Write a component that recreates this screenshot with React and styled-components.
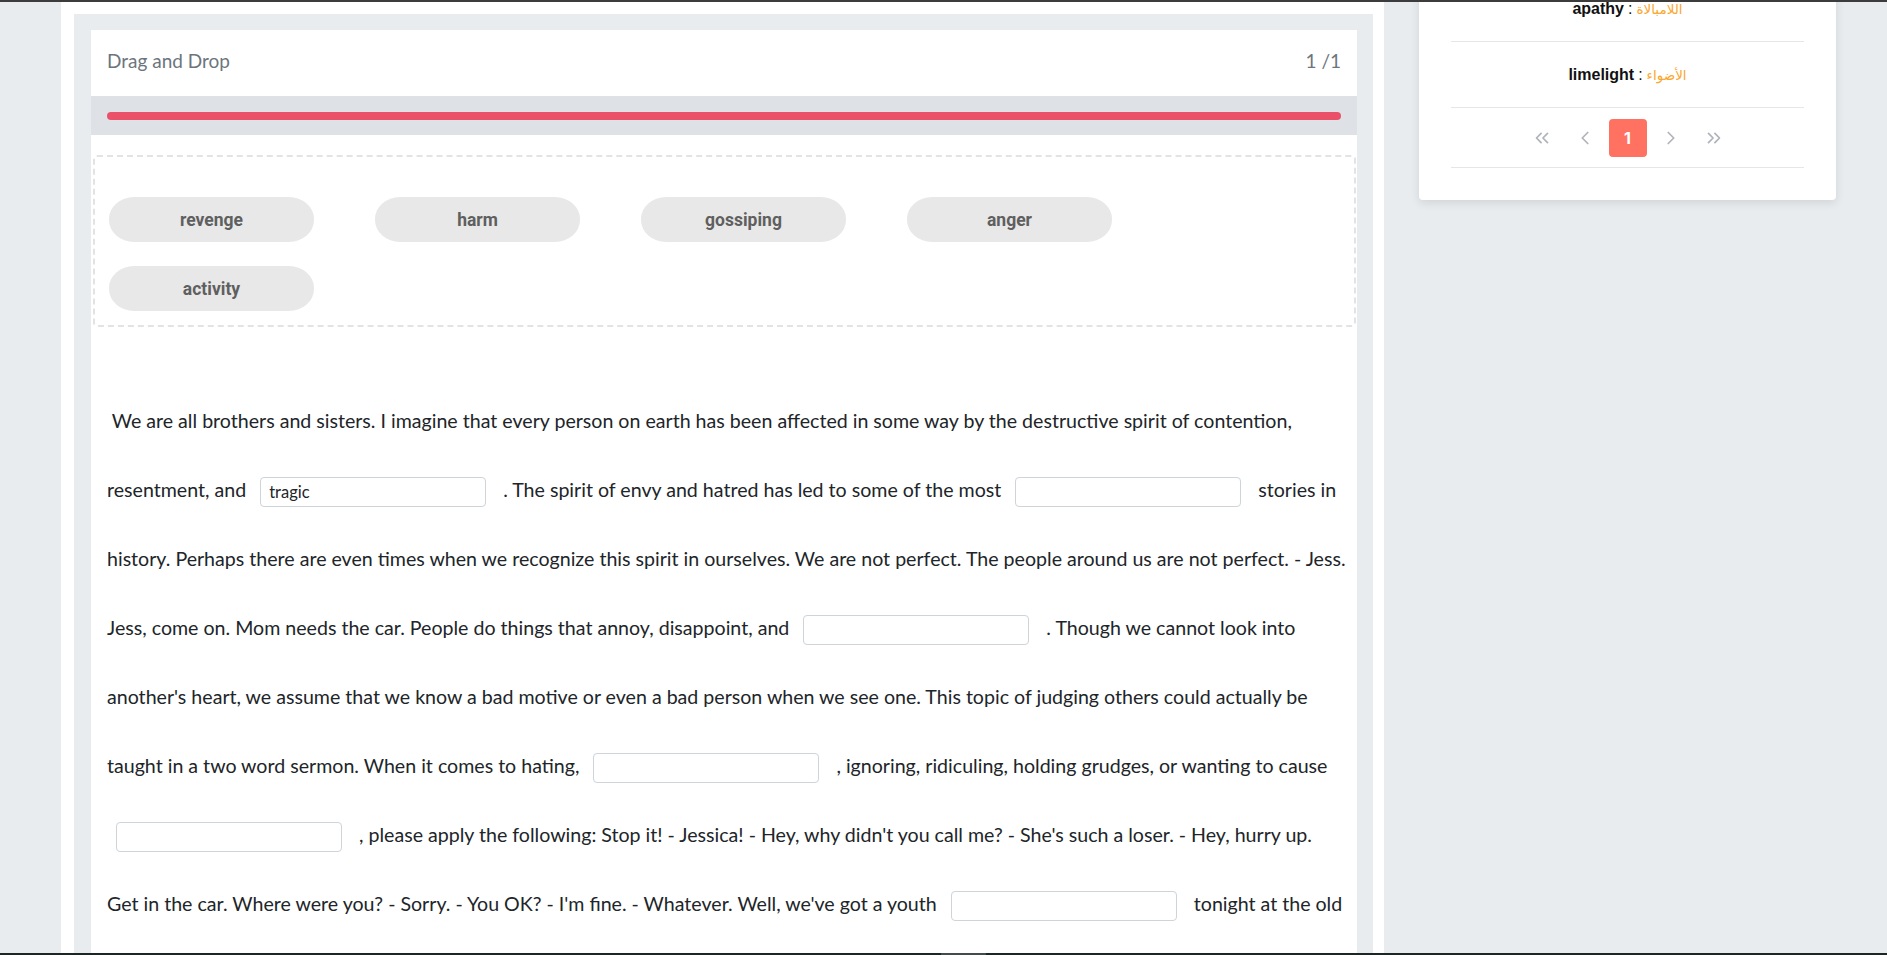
import React from 'react';
import styled, { createGlobalStyle } from 'styled-components';
import { ChevronsLeft, ChevronLeft, ChevronRight, ChevronsRight } from 'lucide-react';

const GlobalStyle = createGlobalStyle`
  html, body {
    margin: 0;
    padding: 0;
    overflow: hidden;
    height: 100%;
  }
  body {
    background: #e9ecef;
    border-top: 2px solid #3c3c3c;
    box-sizing: border-box;
    font-family: Lato, "Open Sans", sans-serif;
  }
  *, *::before, *::after { box-sizing: border-box; }
`;

const Page = styled.div`
  display: flex;
  align-items: flex-start;
  gap: 35px;
  padding-left: 61px;
  height: calc(100vh - 2px);
  overflow: hidden;
`;

const MainColumn = styled.main`
  width: 1323px;
  flex-shrink: 0;
  align-self: stretch;
  background: #ffffff;
  padding: 12px 11px 0 13px;
`;

const Panel = styled.section`
  background: #e9ecef;
  padding: 16px 16px 0 17px;
  min-height: 100%;
`;

const Card = styled.div`
  background: #ffffff;
`;

const CardHeader = styled.header`
  height: 66px;
  display: flex;
  align-items: center;
  justify-content: space-between;
  padding: 0 16px 6px;
  color: #6c757d;
  font-size: 19px;
`;

const ProgressTrack = styled.div`
  height: 39px;
  background: #dee2e6;
  display: flex;
  align-items: center;
  padding: 0 16px;
`;

const ProgressBar = styled.div`
  height: 8px;
  border-radius: 4px;
  background: #ea5168;
`;

const DropZone = styled.div`
  margin: 20px 1px 0 2px;
  border: 2px dashed #e3e3e3;
  border-radius: 4px;
  padding: 40px 14px 14px;
  display: flex;
  flex-wrap: wrap;
  column-gap: 61px;
  row-gap: 24px;
`;

const Chip = styled.div`
  width: 205px;
  height: 45px;
  border-radius: 25px / 22px;
  background: #e8e8e8;
  color: #5f5f5f;
  font-family: Roboto, "Liberation Sans", sans-serif;
  font-weight: 700;
  font-size: 17.5px;
  display: flex;
  align-items: center;
  justify-content: center;
  cursor: grab;
`;

const Passage = styled.p`
  margin: 59px 0 0;
  padding: 0 16px;
  font-size: 19.6px;
  line-height: 69px;
  color: #212529;
  white-space: nowrap;
`;

const Blank = styled.input`
  width: 226px;
  height: 30px;
  margin: 0 12px 0 9px;
  padding: 0 8px;
  border: 1px solid #ced4da;
  border-radius: 4px;
  font-family: Lato, "Open Sans", sans-serif;
  font-size: 16.5px;
  color: #212529;
  vertical-align: middle;
  outline: none;
`;

const Sidebar = styled.aside`
  width: 417px;
  flex-shrink: 0;
`;

const SideCard = styled.div`
  margin-top: -26px;
  background: #ffffff;
  border-radius: 4px;
  padding: 0 32px 32px;
  box-shadow: 0 3px 10px rgba(0, 0, 0, 0.1);
  font-family: "Liberation Sans", Arial, sans-serif;
`;

const WordRow = styled.div`
  height: 66px;
  border-bottom: 1px solid #e6e6e6;
  display: flex;
  align-items: center;
  justify-content: center;
  gap: 4px;
  font-size: 16px;
  color: #111111;
`;

const Word = styled.span`
  font-weight: 700;
`;

const Translation = styled.span`
  color: #fba72e;
  font-family: "DejaVu Sans", "Noto Sans", sans-serif;
  font-size: 13.5px;
`;

const Pager = styled.nav`
  height: 60px;
  border-bottom: 1px solid #e6e6e6;
  display: flex;
  align-items: center;
  justify-content: center;
  gap: 5px;
`;

const PageItem = styled.button`
  width: 38px;
  height: 38px;
  border: none;
  border-radius: 4px;
  padding: 0;
  display: flex;
  align-items: center;
  justify-content: center;
  background: ${(p) => (p.$active ? '#ff7262' : 'transparent')};
  color: ${(p) => (p.$active ? '#ffffff' : '#b1b3bb')};
  font-family: Inter, "Liberation Sans", sans-serif;
  font-weight: 700;
  font-size: 16px;
  cursor: pointer;
`;

const BottomBar = styled.div`
  position: fixed;
  left: 0;
  right: 0;
  bottom: 0;
  height: 2px;
  background: #1c2625;
  display: flex;
`;

const BottomThumb = styled.div`
  margin-left: 941px;
  width: 45px;
  background: #444b4b;
`;

const chips = ['revenge', 'harm', 'gossiping', 'anger', 'activity'];

const BLANK = (value = '') => ({ value });

const lines = [
  ['\u00a0We are all brothers and sisters. I imagine that every person on earth has been affected in some way by the destructive spirit of contention,'],
  ['resentment, and ', BLANK('tragic'), ' . The spirit of envy and hatred has led to some of the most ', BLANK(), ' stories in'],
  ['history. Perhaps there are even times when we recognize this spirit in ourselves. We are not perfect. The people around us are not perfect. - Jess.'],
  ['Jess, come on. Mom needs the car. People do things that annoy, disappoint, and ', BLANK(), ' . Though we cannot look into'],
  ["another's heart, we assume that we know a bad motive or even a bad person when we see one. This topic of judging others could actually be"],
  ['taught in a two word sermon. When it comes to hating, ', BLANK(), ' , ignoring, ridiculing, holding grudges, or wanting to cause'],
  [BLANK(), " , please apply the following: Stop it! - Jessica! - Hey, why didn't you call me? - She's such a loser. - Hey, hurry up."],
  ["Get in the car. Where were you? - Sorry. - You OK? - I'm fine. - Whatever. Well, we've got a youth ", BLANK(), ' tonight at the old'],
  ['church. Can you come?'],
];

const words = [
  { en: 'apathy', ar: 'اللامبالاة' },
  { en: 'limelight', ar: 'الأضواء' },
];

export default function App() {
  return (
    <>
      <GlobalStyle />
      <Page>
        <MainColumn>
          <Panel>
            <Card>
              <CardHeader>
                <span>Drag and Drop</span>
                <span>1 /1</span>
              </CardHeader>
              <ProgressTrack>
                <ProgressBar style={{ width: '100%' }} />
              </ProgressTrack>
              <DropZone>
                {chips.map((c) => (
                  <Chip key={c}>{c}</Chip>
                ))}
              </DropZone>
              <Passage>
                {lines.map((line, li) => (
                  <React.Fragment key={li}>
                    {line.map((part, i) =>
                      typeof part === 'string' ? (
                        <React.Fragment key={i}>{part}</React.Fragment>
                      ) : (
                        <Blank key={i} type="text" defaultValue={part.value} />
                      )
                    )}
                    {li < lines.length - 1 && <br />}
                  </React.Fragment>
                ))}
              </Passage>
            </Card>
          </Panel>
        </MainColumn>
        <Sidebar>
          <SideCard>
            {words.map((w) => (
              <WordRow key={w.en}>
                <Word>{w.en}</Word>
                <span>:</span>
                <Translation>{w.ar}</Translation>
              </WordRow>
            ))}
            <Pager>
              <PageItem><ChevronsLeft size={22} strokeWidth={1.9} /></PageItem>
              <PageItem><ChevronLeft size={22} strokeWidth={1.9} /></PageItem>
              <PageItem $active>1</PageItem>
              <PageItem><ChevronRight size={22} strokeWidth={1.9} /></PageItem>
              <PageItem><ChevronsRight size={22} strokeWidth={1.9} /></PageItem>
            </Pager>
          </SideCard>
        </Sidebar>
      </Page>
      <BottomBar>
        <BottomThumb />
      </BottomBar>
    </>
  );
}
